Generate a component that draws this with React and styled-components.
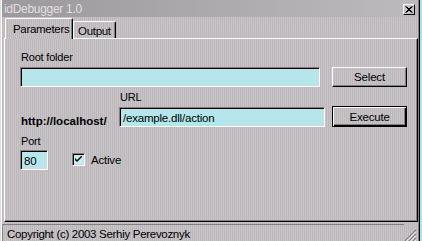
import React from "react";
import styled, { createGlobalStyle, css } from "styled-components";

const GlobalStyle = createGlobalStyle`
  html, body {
    margin: 0;
    padding: 0;
    background: #a6e6e8;
    overflow: hidden;
  }
  body {
    font-family: "Liberation Sans", Arial, sans-serif;
    font-size: 11px;
    letter-spacing: -0.2px;
    color: #000;
  }
`;

const dither = css`
  background-color: #c2bec2;
  background-image: repeating-linear-gradient(
    90deg,
    #c8c4c8 0 1px,
    #bbb7bb 1px 2px
  );
`;

const Window = styled.div`
  ${dither};
  width: 420px;
  height: 243px;
  box-sizing: border-box;
  padding: 0 2px;
  border-left: 1px solid #dcdcdc;
  border-right: 1px solid #000;
  box-shadow: inset 1px 0 #fff, inset -1px 0 #808080;
  display: flex;
  flex-direction: column;
`;

const TitleBar = styled.div`
  height: 17px;
  margin: 0 -1px;
  display: flex;
  align-items: center;
  justify-content: space-between;
  padding: 0 3px 0 2px;
  background: linear-gradient(90deg, #9c999c, #bdbabd);
`;

const Title = styled.span`
  color: #e2dee2;
  font-size: 12px;
  letter-spacing: -0.3px;
`;

const CloseButton = styled.div`
  width: 12px;
  height: 11px;
  margin-top: 2px;
  box-sizing: border-box;
  background: #c6c2c6;
  border-top: 1px solid #fff;
  border-left: 1px solid #fff;
  border-right: 1px solid #000;
  border-bottom: 1px solid #000;
  display: flex;
  align-items: center;
  justify-content: center;
`;

const TabStrip = styled.div`
  display: flex;
  align-items: flex-end;
  height: 21px;
  padding-left: 2px;
  position: relative;
  z-index: 1;
`;

const Tab = styled.div`
  box-sizing: border-box;
  height: ${({ $active }) => ($active ? 21 : 17)}px;
  width: ${({ $w }) => $w}px;
  margin-bottom: ${({ $active }) => ($active ? -1 : 0)}px;
  ${dither};
  border-top: 1px solid #fff;
  border-left: 1px solid #fff;
  border-right: 1px solid #000;
  border-radius: 2px 2px 0 0;
  box-shadow: inset -1px 0 #808080;
  padding: ${({ $active }) => ($active ? "4px 0 0 7px" : "3px 0 0 4px")};
  font-size: 11.5px;
  letter-spacing: -0.3px;
  white-space: nowrap;
`;

const Panel = styled.div`
  box-sizing: border-box;
  height: 184px;
  margin-left: 1px;
  width: 414px;
  border-top: 1px solid #fff;
  border-left: 1px solid #fff;
  border-right: 1px solid #000;
  border-bottom: 1px solid #000;
  box-shadow: inset -1px -1px #808080;
  padding: 12px 0 0 15px;
  display: flex;
  flex-direction: column;
`;

const Label = styled.div`
  line-height: 13px;
  height: 13px;
  margin-bottom: ${({ $mb }) => $mb ?? 3}px;
  margin-top: ${({ $mt }) => $mt ?? 0}px;
  margin-left: 1px;
`;

const Row = styled.div`
  display: flex;
  align-items: ${({ $align }) => $align || "center"};
  gap: ${({ $gap }) => $gap}px;
  margin-top: ${({ $mt }) => $mt ?? 0}px;
`;

const Column = styled.div`
  display: flex;
  flex-direction: column;
`;

const Input = styled.div`
  flex: none;
  box-sizing: border-box;
  width: ${({ $w }) => $w}px;
  height: 20px;
  background: #b6e6ec;
  border-top: 1px solid #808080;
  border-left: 1px solid #808080;
  border-right: 1px solid #fff;
  border-bottom: 1px solid #fff;
  box-shadow: inset 1px 1px #000, inset -1px -1px #d8d4d8;
  padding: 3px 0 0 3px;
  font-size: 11.5px;
  line-height: 14px;
  white-space: nowrap;
  overflow: hidden;
`;

const Button = styled.div`
  flex: none;
  box-sizing: border-box;
  width: 75px;
  height: ${({ $default }) => ($default ? 21 : 20)}px;
  ${dither};
  display: flex;
  align-items: center;
  justify-content: center;
  font-size: 11.5px;
  border-top: 1px solid #fff;
  border-left: 1px solid #fff;
  border-right: 1px solid #000;
  border-bottom: 1px solid #000;
  box-shadow: inset -1px -1px #808080;
  ${({ $default }) =>
    $default &&
    css`
      border: 1px solid #000;
      box-shadow: inset 1px 1px #fff, inset -1px -1px #000,
        inset -2px -2px #808080;
    `}
`;

const HostLabel = styled.div`
  flex: none;
  font-weight: bold;
  font-size: 11.5px;
  letter-spacing: 0;
  line-height: 14px;
  width: 91px;
  margin-left: 1px;
  margin-bottom: -1px;
  white-space: nowrap;
`;

const CheckBox = styled.div`
  box-sizing: border-box;
  width: 13px;
  height: 13px;
  background: #c8eef2;
  border-top: 1px solid #808080;
  border-left: 1px solid #808080;
  border-right: 1px solid #fff;
  border-bottom: 1px solid #fff;
  box-shadow: inset 1px 1px #000, inset -1px -1px #d8d4d8;
  display: flex;
  align-items: center;
  justify-content: center;
`;

const CheckLabel = styled.label`
  display: flex;
  align-items: center;
  gap: 6px;
  font-size: 11.5px;
  margin-top: -1px;
`;

const StatusBar = styled.div`
  margin-top: 2px;
  height: 18px;
  display: flex;
  align-items: center;
  justify-content: space-between;
  margin-left: -1px;
`;

const StatusPanel = styled.div`
  flex: 1;
  box-sizing: border-box;
  height: 18px;
  border-top: 1px solid #808080;
  border-left: 1px solid #808080;
  border-bottom: 1px solid #fff;
  padding: 2px 0 0 4px;
  font-size: 11.5px;
  letter-spacing: -0.3px;
  line-height: 14px;
  white-space: nowrap;
`;

const Grip = styled.svg`
  flex: none;
  align-self: flex-end;
`;

export default function App() {
  return (
    <>
      <GlobalStyle />
      <Window>
        <TitleBar>
          <Title>idDebugger 1.0</Title>
          <CloseButton>
            <svg width="8" height="7" viewBox="0 0 8 7">
              <path
                d="M0.5 0.5 L6.5 6.5 M1.5 0.5 L7.5 6.5 M6.5 0.5 L0.5 6.5 M7.5 0.5 L1.5 6.5"
                stroke="#000"
                strokeWidth="1"
                fill="none"
              />
            </svg>
          </CloseButton>
        </TitleBar>
        <TabStrip>
          <Tab $active $w={68}>Parameters</Tab>
          <Tab $w={43}>Output</Tab>
        </TabStrip>
        <Panel>
          <Label>Root folder</Label>
          <Row $gap={12}>
            <Input $w={300} />
            <Button>Select</Button>
          </Row>
          <Row $gap={7} $align="flex-end" $mt={4}>
            <HostLabel>http://localhost/</HostLabel>
            <Column>
              <Label>URL</Label>
              <Input $w={206}>/example.dll/action</Input>
            </Column>
            <Button $default>Execute</Button>
          </Row>
          <Label $mt={8} $mb={2}>
            Port
          </Label>
          <Row $gap={24}>
            <Input $w={28}>80</Input>
            <CheckLabel>
              <CheckBox>
                <svg width="7" height="7" viewBox="0 0 7 7">
                  <path d="M0 2 L0 4 L2 6 L7 1 L7 -1 L2 4 Z" fill="#000" />
                </svg>
              </CheckBox>
              Active
            </CheckLabel>
          </Row>
        </Panel>
        <StatusBar>
          <StatusPanel>Copyright (c) 2003 Serhiy Perevoznyk</StatusPanel>
          <Grip width="13" height="13" viewBox="0 0 13 13">
            <path
              d="M12 1 L1 12 M12 5 L5 12 M12 9 L9 12"
              stroke="#808080"
              strokeWidth="1.2"
            />
            <path
              d="M12 2.5 L2.5 12 M12 6.5 L6.5 12 M12 10.5 L10.5 12"
              stroke="#fff"
              strokeWidth="1"
            />
          </Grip>
        </StatusBar>
      </Window>
    </>
  );
}
